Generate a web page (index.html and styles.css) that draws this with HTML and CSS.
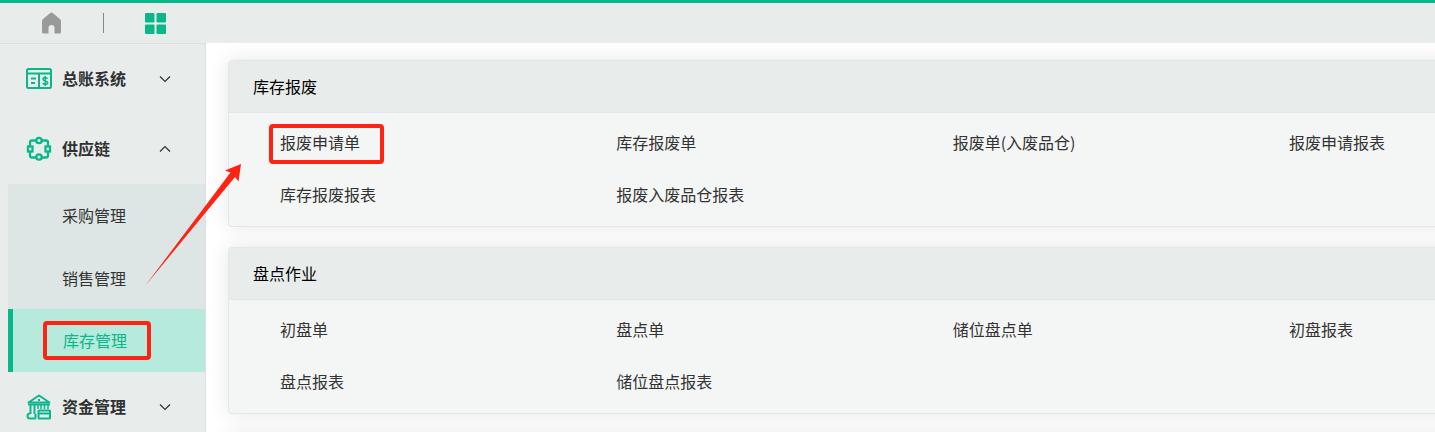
FILE: index.html
```html
<!DOCTYPE html>
<html lang="zh-CN">
<head>
    <meta charset="UTF-8">
    <meta name="viewport" content="width=device-width, initial-scale=1.0">
    <title>库存管理</title>
    <link rel="stylesheet" href="styles.css">
</head>
<body>
    <div class="page">
        <header class="topbar">
            <button class="top-btn" type="button" aria-label="首页">
                <svg width="21" height="22" viewBox="0 0 21 22"><path fill="#999" d="M9.300.9a2 2 0 0 1 2.400 0l7.200 6c.7.6 1.100 1.200 1.100 2.100V20a1.500 1.500 0 0 1-1.500 1.500H13.500V16a3 3 0 0 0-6 0v5.500H2.500A1.500 1.500 0 0 1 1 20V9c0-.9.4-1.500 1.100-2.100z"/></svg>
            </button>
            <span class="divider"></span>
            <button class="top-btn" type="button" aria-label="菜单">
                <svg width="21" height="21" viewBox="0 0 21 21" fill="#0ab78a"><rect width="9.500" height="9.500" rx="1"/><rect x="11.500" width="9.500" height="9.500" rx="1"/><rect y="11.500" width="9.500" height="9.500" rx="1"/><rect x="11.500" y="11.500" width="9.500" height="9.500" rx="1"/></svg>
            </button>
        </header>

        <div class="layout">
            <nav class="sidebar">
                <button class="menu-title" type="button">
                    <svg class="menu-icon" viewBox="0 0 26 26" fill="none" stroke="#0ab78a" stroke-width="2">
                        <rect x="1" y="3" width="24" height="19" rx="1.500"/>
                        <path d="M1 7.500h24M13 7.500V22M5 12.500h5M5 17h4"/>
                        <path stroke-width="1.500" d="M21.500 12.800c-.5-1-1.300-1.300-2.300-1.300-1.200 0-2.200.6-2.200 1.700 0 2.400 4.700 1.200 4.700 3.600 0 1.100-1.100 1.700-2.400 1.700-1.200 0-2.100-.5-2.500-1.500M19.200 10v10"/>
                    </svg>
                    <span class="menu-text">总账系统</span>
                    <svg class="chevron" viewBox="0 0 12 12"><path d="M1 3.500l5 5 5-5"/></svg>
                </button>
                <button class="menu-title" type="button">
                    <svg class="menu-icon" viewBox="0 0 26 26" fill="none" stroke="#0ab78a" stroke-width="2.300">
                        <path d="M10 4.500H6a2 2 0 0 0-2 2V10M16 4.500h4a2 2 0 0 1 2 2V10M4 16v3.500a2 2 0 0 0 2 2h4M22 16v3.500a2 2 0 0 1-2 2h-4"/>
                        <circle cx="13" cy="4.500" r="2.700"/>
                        <circle cx="13" cy="21" r="2.700"/>
                        <rect x="2" y="10.500" width="4.500" height="5"/>
                        <rect x="19.500" y="10.500" width="4.500" height="5"/>
                    </svg>
                    <span class="menu-text">供应链</span>
                    <svg class="chevron" viewBox="0 0 12 12"><path d="M1 8.500l5-5 5 5"/></svg>
                </button>
                <ul class="submenu">
                    <li><a href="#">采购管理</a></li>
                    <li><a href="#">销售管理</a></li>
                    <li class="active"><a href="#"><span class="marked marked-menu">库存管理</span></a></li>
                </ul>
                <button class="menu-title" type="button">
                    <svg class="menu-icon" viewBox="0 0 26 26" fill="none" stroke="#0ab78a" stroke-width="2">
                        <path stroke-linejoin="round" d="M2.500 8.500L13 1.500l10.500 7z"/>
                        <path d="M13 5v2M2 10.500h22M4.500 11v9M8.500 11v9M4 19.500a2 2 0 0 0 0 5h6M9.500 20v4"/>
                        <path stroke-width="1.500" d="M12 11v4M15 11v4M18.500 11v4M22 11v4"/>
                        <rect x="12.500" y="16.500" width="11.500" height="8" rx=".5"/>
                        <path d="M12.500 19.500H24"/>
                    </svg>
                    <span class="menu-text">资金管理</span>
                    <svg class="chevron" viewBox="0 0 12 12"><path d="M1 3.500l5 5 5-5"/></svg>
                </button>
            </nav>

            <main class="content">
                <section class="card">
                    <h2>库存报废</h2>
                    <div class="card-body">
                        <a href="#"><span class="marked marked-link">报废申请单</span></a>
                        <a href="#">库存报废单</a>
                        <a href="#">报废单(入废品仓)</a>
                        <a href="#">报废申请报表</a>
                        <a href="#">库存报废报表</a>
                        <a href="#">报废入废品仓报表</a>
                    </div>
                </section>
                <section class="card">
                    <h2>盘点作业</h2>
                    <div class="card-body">
                        <a href="#">初盘单</a>
                        <a href="#">盘点单</a>
                        <a href="#">储位盘点单</a>
                        <a href="#">初盘报表</a>
                        <a href="#">盘点报表</a>
                        <a href="#">储位盘点报表</a>
                    </div>
                </section>
                <section class="card"></section>
            </main>
        </div>

        <svg class="arrow" viewBox="0 0 97 122"><path fill="#ff2313" d="M0 122L85.500 8.500 80 6.500 96 0l-2.500 17.500-3.500-4.500z"/></svg>
    </div>
</body>
</html>
```
FILE: styles.css
```css
* {
    box-sizing: border-box;
}

body {
    margin: 0;
    font-family: "Microsoft YaHei", "Noto Sans CJK SC", sans-serif;
    font-size: 16px;
    line-height: 24px;
    color: #333;
    background-color: #fff;
}

button {
    padding: 0;
    border: none;
    background: none;
    font: inherit;
    color: inherit;
    cursor: pointer;
}

a {
    color: inherit;
    text-decoration: none;
}

.page {
    position: relative;
    display: flex;
    flex-direction: column;
    height: 100vh;
    overflow: hidden;
}

/* top bar */
.topbar {
    display: flex;
    align-items: center;
    flex-shrink: 0;
    gap: 41px;
    height: 43px;
    padding-left: 41px;
    border-top: 3px solid #0ab78a;
    background-color: #e8edeb;
}

.top-btn {
    display: flex;
}

.divider {
    width: 1px;
    height: 20px;
    background-color: #888;
}

.layout {
    display: flex;
    flex: 1;
    min-height: 0;
}

/* left menu */
.sidebar {
    flex-shrink: 0;
    width: 206px;
    border-top: 1px solid #dcdfe0;
    border-right: 1px solid #dcdfe6;
    background-color: #e8edeb;
    overflow: hidden;
}

.menu-title {
    display: flex;
    align-items: center;
    width: 100%;
    height: 70px;
    padding-left: 26px;
    text-align: left;
    color: #303133;
}

.menu-icon {
    width: 26px;
    height: 26px;
    margin-right: 10px;
}

.menu-text {
    width: 97px;
    padding-bottom: 2px;
    font-weight: bold;
}

.chevron {
    width: 12px;
    height: 12px;
    fill: none;
    stroke: #303133;
    stroke-width: 1.2;
}

.submenu {
    display: flex;
    flex-direction: column;
    height: 188px;
    margin: 0 0 0 8px;
    padding: 0;
    list-style: none;
    background-color: #dde6e4;
}

.submenu li {
    display: flex;
    flex: 1;
}

.submenu a {
    display: flex;
    align-items: center;
    flex: 1;
    padding: 0 0 1px 54px;
}

.submenu .active {
    border-left: 5px solid #0ab78a;
    background-color: #b5eadc;
    color: #0ab78a;
}

.submenu .active a {
    padding-left: 50px;
}

/* cards */
.content {
    flex: 1;
    min-width: 0;
    padding: 17px 0 0 22px;
    overflow: hidden;
}

.card {
    width: 118%;
    min-height: 60px;
    margin-bottom: 20px;
    border: 1px solid #e2e6ee;
    border-radius: 4px;
    background-color: #f4f6f5;
    box-shadow: 0 0 20px rgba(0, 0, 0, 0.1);
}

.card h2 {
    margin: 0;
    padding: 13px 24px 14px;
    border-bottom: 1px solid #e2e6ee;
    border-radius: 4px 4px 0 0;
    background-color: #e8edeb;
    font-size: 16px;
    font-weight: normal;
    color: #000;
}

.card-body {
    display: grid;
    grid-template-columns: repeat(4, 1fr);
    padding: 4px 37px 5px 40px;
}

.card-body a {
    padding: 13px 11px 15px;
}

/* red marks */
.marked {
    position: relative;
}

.marked::after {
    content: "";
    position: absolute;
    border: 4px solid #ff2313;
    border-radius: 4px;
}

.marked-menu::after {
    inset: -7px -24px -8px -20px;
}

.marked-link::after {
    inset: -6px -24px -10px -11px;
}

.arrow {
    position: absolute;
    left: 145px;
    top: 164px;
    width: 97px;
    height: 122px;
}
```
